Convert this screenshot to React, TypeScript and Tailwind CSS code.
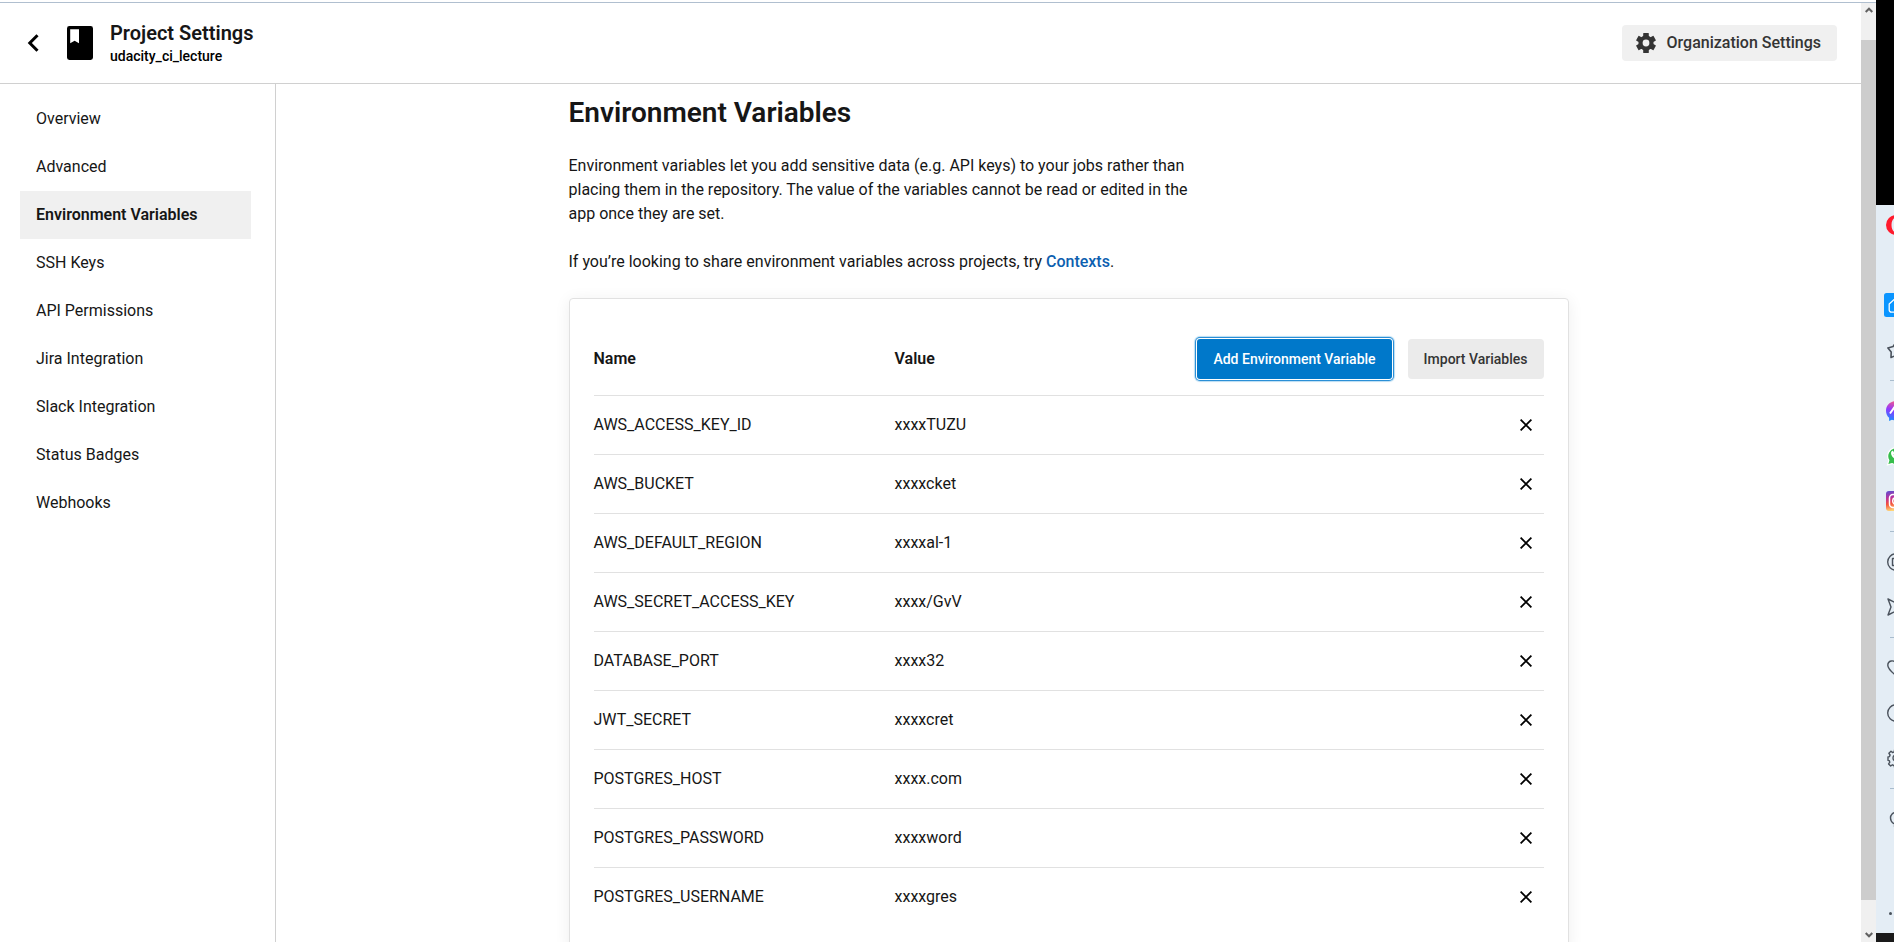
import React from "react";

const navItems = [
  "Overview",
  "Advanced",
  "Environment Variables",
  "SSH Keys",
  "API Permissions",
  "Jira Integration",
  "Slack Integration",
  "Status Badges",
  "Webhooks",
];

const variables = [
  { name: "AWS_ACCESS_KEY_ID", value: "xxxxTUZU" },
  { name: "AWS_BUCKET", value: "xxxxcket" },
  { name: "AWS_DEFAULT_REGION", value: "xxxxal-1" },
  { name: "AWS_SECRET_ACCESS_KEY", value: "xxxx/GvV" },
  { name: "DATABASE_PORT", value: "xxxx32" },
  { name: "JWT_SECRET", value: "xxxxcret" },
  { name: "POSTGRES_HOST", value: "xxxx.com" },
  { name: "POSTGRES_PASSWORD", value: "xxxxword" },
  { name: "POSTGRES_USERNAME", value: "xxxxgres" },
];

function GearIcon() {
  return (
    <svg width="20" height="20" viewBox="0 0 20 20" fill="#343434" aria-hidden="true">
      <rect x="7.200" width="5.600" height="20" rx="0.600" />
      <rect x="7.200" width="5.600" height="20" rx="0.600" transform="rotate(60 10 10)" />
      <rect x="7.200" width="5.600" height="20" rx="0.600" transform="rotate(120 10 10)" />
      <circle cx="10" cy="10" r="7.600" />
      <circle cx="10" cy="10" r="3.400" fill="#f0f0f0" />
    </svg>
  );
}

function Header() {
  return (
    <header className="flex h-[81px] shrink-0 items-center border-b border-[#d0d0d0] pr-6 pl-6">
      <button type="button" aria-label="Back" className="flex h-8 w-[18px] items-center justify-center">
        <svg width="12" height="18" viewBox="0 0 12 18" fill="none" stroke="#000" strokeWidth="3">
          <path d="M10.500 1.200 2.800 9l7.700 7.800" />
        </svg>
      </button>
      <svg className="ml-[25px]" width="26" height="34" viewBox="0 0 26 34" aria-hidden="true">
        <path
          fillRule="evenodd"
          d="M2.400 0h21.200a2.400 2.400 0 0 1 2.400 2.400v29.200a2.400 2.400 0 0 1-2.400 2.400H2.400a2.400 2.400 0 0 1-2.400-2.400V2.400A2.400 2.400 0 0 1 2.400 0ZM3.200 3.200v14l4.400-2.400 4.400 2.400v-14Z"
        />
      </svg>
      <div className="ml-[17px]">
        <h1 className="text-[20px] leading-[26px] font-semibold text-[#161616]">Project Settings</h1>
        <p className="text-[14px] leading-5 font-medium text-black">udacity_ci_lecture</p>
      </div>
      <a
        href="#organization"
        className="ml-auto flex h-9 items-center gap-[11px] rounded bg-[#f0f0f0] pr-4 pl-[14px] text-[16px] font-medium text-[#343434]"
      >
        <GearIcon />
        Organization Settings
      </a>
    </header>
  );
}

function SideNav() {
  return (
    <nav className="w-[276px] shrink-0 border-r border-[#d0d0d0] pt-[11px] pr-6 pl-5">
      {navItems.map((item) => (
        <a
          key={item}
          href="#settings"
          className={
            item === "Environment Variables"
              ? "flex h-12 items-center bg-[#f0f0f0] px-4 font-semibold text-[#161616]"
              : "flex h-12 items-center px-4 text-[#161616]"
          }
        >
          {item}
        </a>
      ))}
    </nav>
  );
}

function VariablesTable() {
  return (
    <section className="mt-6 rounded border border-[#e1e1e1] p-6 shadow-[0_2px_16px_rgba(0,0,0,0.07)]">
      <table className="w-full border-separate border-spacing-0 text-left">
        <thead>
          <tr>
            <th className="h-[73px] w-[301px] border-b border-[#e1e1e1] p-0 font-semibold">Name</th>
            <th className="border-b border-[#e1e1e1] p-0 font-semibold">Value</th>
            <th className="border-b border-[#e1e1e1] p-0">
              <div className="flex justify-end gap-4 text-[14px] font-medium">
                <button
                  type="button"
                  className="h-10 rounded-[3px] bg-[#0078ca] px-4 text-white shadow-[0_0_0_1px_#ffffff,0_0_0_2px_#2a8fd6,0_0_1px_3px_#b9dcf3]"
                >
                  Add Environment Variable
                </button>
                <button type="button" className="h-10 rounded bg-[#ebebeb] px-4 text-[#343434]">
                  Import Variables
                </button>
              </div>
            </th>
          </tr>
        </thead>
        <tbody className="[&_td]:border-b [&_td]:border-[#e1e1e1] [&>tr:last-child>td]:border-transparent">
          {variables.map((v) => (
            <tr key={v.name}>
              <td className="h-[59px] p-0">{v.name}</td>
              <td className="p-0">{v.value}</td>
              <td className="p-0 pr-3">
                <button type="button" aria-label={"Delete " + v.name} className="ml-auto block">
                  <svg width="12" height="12" viewBox="0 0 12 12" fill="none" stroke="#000" strokeWidth="1.800">
                    <path d="M.6.6l10.800 10.800M11.400.6.6 11.400" />
                  </svg>
                </button>
              </td>
            </tr>
          ))}
        </tbody>
      </table>
    </section>
  );
}

function ScrollBar() {
  return (
    <div className="flex w-[15px] shrink-0 flex-col bg-[#f0f0f0]" aria-hidden="true">
      <div className="flex h-[37px] justify-center pt-[4px]">
        <svg width="8" height="6" viewBox="0 0 8 6" fill="none" stroke="#606060" strokeWidth="2">
          <path d="M.7 5 4 1.700 7.300 5" />
        </svg>
      </div>
      <div className="flex-1 bg-[#cdcdcd]" />
      <div className="flex h-[42px] items-end justify-center pb-[4px]">
        <svg width="8" height="6" viewBox="0 0 8 6" fill="none" stroke="#606060" strokeWidth="2">
          <path d="M.7 1 4 4.300 7.300 1" />
        </svg>
      </div>
    </div>
  );
}

function Slot({ label, children }: { label: string; children: React.ReactNode }) {
  return (
    <button type="button" aria-label={label} className="flex h-[45px] w-full shrink-0 items-center justify-center">
      {children}
    </button>
  );
}

function Divider() {
  return (
    <div className="flex h-4 w-full shrink-0 items-center justify-center">
      <div className="h-px w-3 bg-[#a9bccd]" />
    </div>
  );
}

function Line({ children }: { children: React.ReactNode }) {
  return (
    <svg width="20" height="20" viewBox="0 0 20 20" fill="none" stroke="#4a525c" strokeWidth="1.400" strokeLinejoin="round">
      {children}
    </svg>
  );
}

function BrowserRail() {
  return (
    <aside className="flex w-[18px] shrink-0 flex-col overflow-hidden bg-black">
      <div className="h-[205px] shrink-0" />
      <div className="flex w-10 flex-1 flex-col items-center bg-[#e4edf5]">
        <button type="button" aria-label="Opera" className="flex h-10 w-full shrink-0 items-center justify-center">
          <svg width="20" height="20" viewBox="0 0 20 20">
            <path
              fill="#ff1b2d"
              fillRule="evenodd"
              d="M10 0a10 10 0 1 0 0 20 10 10 0 0 0 0-20Zm0 2.500c2.500 0 4.200 3.300 4.200 7.500s-1.700 7.500-4.200 7.500S5.500 14.200 5.500 10 7.500 2.500 10 2.500Z"
            />
          </svg>
        </button>
        <div className="h-[37px] shrink-0" />
        <Slot label="Home">
          <svg width="24" height="24" viewBox="0 0 24 24">
            <rect width="24" height="24" rx="2.500" fill="#0a95ff" />
            <path
              d="M5.200 11 12 4.800l6.800 6.200v6a2.200 2.200 0 0 1-2.200 2.200H7.400A2.200 2.200 0 0 1 5.200 17Z"
              fill="none"
              stroke="#fff"
              strokeWidth="1.300"
              strokeLinejoin="round"
            />
          </svg>
        </Slot>
        <Slot label="Bookmarks">
          <Line>
            <path
              d="M10 2 12.900 6.500 18.100 7.900 14.800 12 15 17.400 10 15.500 5 17.400 5.200 12 1.900 7.900 7.100 6.500Z"
              strokeWidth="1.600"
            />
          </Line>
        </Slot>
        <Divider />
        <Slot label="Messenger">
          <svg width="20" height="20" viewBox="0 0 20 20">
            <defs>
              <linearGradient id="messenger" x1="0.300" y1="1" x2="0.600" y2="0">
                <stop offset="0" stopColor="#1a8cff" />
                <stop offset="0.500" stopColor="#9038ff" />
                <stop offset="1" stopColor="#ff5f7c" />
              </linearGradient>
            </defs>
            <path
              fill="url(#messenger)"
              d="M10 0C4.400 0 0 4.100 0 9.700c0 2.900 1.200 5.400 3.100 7.100V20l2.800-1.200c1.300.4 2.600.6 4.100.6 5.600 0 10-4.100 10-9.700S15.600 0 10 0Z"
            />
            <path d="m4 12.500 4-5.700 3.700 3.400L16 7" fill="none" stroke="#fff" strokeWidth="2" />
          </svg>
        </Slot>
        <Slot label="WhatsApp">
          <svg width="20" height="20" viewBox="0 0 20 20">
            <path
              d="M1.500 18.800 2.800 14.400A8.500 8.500 0 1 1 6 17.600Z"
              fill="#35bd4b"
              stroke="#fff"
              strokeWidth="1.200"
            />
            <path
              fill="#fff"
              d="M7.300 5.200c-.5-.9-1.300-.5-1.800.3-1.300 2.200.4 4.700 2 6.300 1.600 1.600 4.300 3.200 6.200 1.800.9-.6 1-1.700.2-2.100l-1.600-.8c-.7-.3-1.100 1.100-1.700.9-1.200-.5-2.400-1.600-2.900-2.900-.2-.6.9-1 .6-1.700Z"
            />
          </svg>
        </Slot>
        <Slot label="Instagram">
          <svg width="20" height="20" viewBox="0 0 20 20">
            <defs>
              <linearGradient id="instagram" x1="0" y1="0" x2="0.200" y2="1">
                <stop offset="0" stopColor="#5b4fd0" />
                <stop offset="0.350" stopColor="#b832a0" />
                <stop offset="0.650" stopColor="#f4503c" />
                <stop offset="1" stopColor="#ffd676" />
              </linearGradient>
            </defs>
            <rect width="20" height="20" rx="3" fill="url(#instagram)" />
            <g fill="none" stroke="#fff" strokeWidth="1.500">
              <rect x="3.500" y="3.500" width="13" height="13" rx="3.500" />
              <circle cx="10" cy="10" r="3.300" />
            </g>
          </svg>
        </Slot>
        <Divider />
        <Slot label="Player">
          <Line>
            <circle cx="10" cy="10" r="8.300" />
            <path d="M6.500 6.500h7v7h-7Z" />
          </Line>
        </Slot>
        <Slot label="Flow">
          <Line>
            <path d="M2 2 18 10 2 18l3-8Z" />
          </Line>
        </Slot>
        <Divider />
        <Slot label="Favorites">
          <Line>
            <path d="M10 17.500C5.500 14 1.800 10.800 1.800 7.300c0-5 6.200-6 8.200-1.800 2-4.200 8.200-3.200 8.200 1.800 0 3.500-3.700 6.700-8.200 10.200Z" />
          </Line>
        </Slot>
        <Slot label="History">
          <Line>
            <circle cx="10" cy="10" r="8.300" />
          </Line>
        </Slot>
        <Slot label="Settings">
          <Line>
            <path d="m8.500 2h3l.4 2 1.700.7 1.700-1.200 2.100 2.100-1.200 1.700.7 1.700 1.600.4v3l-1.800.4-.6 1.700 1.200 1.700-2.100 2.100-1.700-1.200-1.700.7-.3 1.200h-3l-.4-1.500-1.700-.7-1.700 1.200-2.100-2.100 1.200-1.700-.5-1.500-1.300-.4V9l1.500-.4.6-1.600-1.200-1.700 2.100-2.100L6.500 4.600l1.700-.6Z" />
            <circle cx="10" cy="10" r="3" />
          </Line>
        </Slot>
        <Divider />
        <Slot label="Tips">
          <Line>
            <path d="M7.500 14.500C5.500 13 4.500 11.200 4.500 9a5.500 5.500 0 0 1 11 0c0 2.200-1 4-3 5.500Z" />
            <path d="M7.500 17h5" stroke="#a9b2bb" />
          </Line>
        </Slot>
        <button type="button" aria-label="More" className="mt-auto flex h-10 w-full items-center justify-center">
          <svg width="15" height="3" viewBox="0 0 15 3" fill="#4a525c">
            <circle cx="1.500" cy="1.500" r="1.500" />
            <circle cx="7.500" cy="1.500" r="1.500" />
            <circle cx="13.500" cy="1.500" r="1.500" />
          </svg>
        </button>
      </div>
      <div className="h-[9px] shrink-0 bg-[#1a1a1a]" />
    </aside>
  );
}

export default function App() {
  return (
    <div className="flex h-screen overflow-hidden bg-white font-['Roboto',sans-serif] text-[16px] leading-6 text-[#161616]">
      <div className="flex min-w-0 flex-1 flex-col">
        <div className="h-[3px] shrink-0 border-b border-[#b0bfcf]" />
        <div className="flex min-h-0 flex-1">
          <div className="flex min-w-0 flex-1 flex-col">
            <Header />
            <div className="flex min-h-0 flex-1">
              <SideNav />
              <main className="min-w-0 flex-1 overflow-hidden px-6">
                <div className="mx-auto max-w-[1000px] pt-[13px]">
                  <h2 className="text-[28px] leading-8 font-semibold">Environment Variables</h2>
                  <div className="mt-[25px] flex max-w-[640px] flex-col gap-6">
                    <p>
                      Environment variables let you add sensitive data (e.g. API keys) to your jobs rather than
                      placing them in the repository. The value of the variables cannot be read or edited in the
                      app once they are set.
                    </p>
                    <p>
                      If you’re looking to share environment variables across projects, try{" "}
                      <a href="#contexts" className="font-medium text-[#0d5fb0]">
                        Contexts
                      </a>
                      .
                    </p>
                  </div>
                  <VariablesTable />
                </div>
              </main>
            </div>
          </div>
          <ScrollBar />
        </div>
      </div>
      <BrowserRail />
    </div>
  );
}
